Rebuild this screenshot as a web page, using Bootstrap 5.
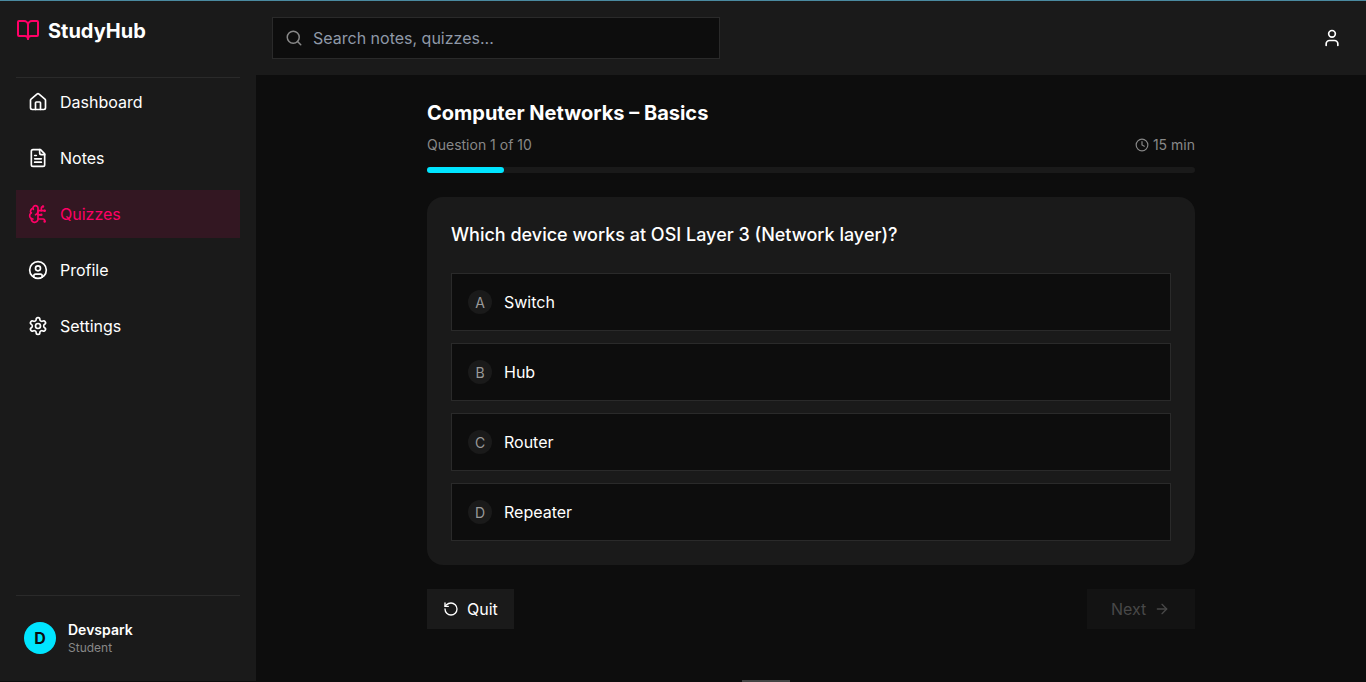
<!DOCTYPE html>
<html lang="en">
<head>
  <meta charset="UTF-8">
  <meta name="viewport" content="width=device-width, initial-scale=1.0">
  <title>StudyHub - Quiz</title>

  <link href="https://cdn.jsdelivr.net/npm/bootstrap@5.3.3/dist/css/bootstrap.min.css" rel="stylesheet">

  <style>
    html, body { height: 100%; overflow: hidden; }

    body {
      background-color: #0d0d0d;
      color: #fff;
      font-family: Inter, "Liberation Sans", sans-serif;
    }

    svg.ico {
      fill: none;
      stroke: currentColor;
      stroke-width: 2;
      stroke-linecap: round;
      stroke-linejoin: round;
      flex-shrink: 0;
    }

    .app-shell { height: 681px; border-top: 1px solid #4a8aa0; }

    /* sidebar */
    .side-panel { width: 256px; background-color: #1a1a1a; padding: 0 16px; }
    .brand-row { height: 77px; padding-top: 18px; border-bottom: 1px solid #2a2a2a; gap: 8px; }
    .brand-row svg { color: #ff0066; margin-top: -1px; }
    .brand-name { font-size: 20px; font-weight: 700; line-height: 24px; }
    .side-nav { gap: 8px; }
    .side-link {
      height: 48px;
      padding: 0 12px;
      gap: 12px;
      color: #fff;
      font-size: 16px;
      font-weight: 400;
      text-decoration: none;
    }
    .side-link:hover { color: #fff; }
    .side-link.is-active, .side-link.is-active:hover { color: #ff0066; background-color: rgba(255, 0, 102, 0.11); }
    .side-user { height: 86px; border-top: 1px solid #2a2a2a; padding: 0 8px 2px 8px; gap: 12px; }
    .user-avatar {
      width: 32px;
      height: 32px;
      background-color: #00e5ff;
      color: #0d0d0d;
      font-size: 16px;
      font-weight: 700;
    }
    .user-name { font-size: 14px; font-weight: 600; line-height: 20px; }
    .user-role { font-size: 12px; color: #888; line-height: 16px; }

    /* top bar */
    .top-bar { height: 74px; background-color: #1a1a1a; padding: 0 24px 0 16px; }
    .search-box {
      width: 448px;
      height: 42px;
      background-color: #0d0d0d;
      border: 1px solid #2a2a2a;
      padding-left: 12px;
      gap: 10px;
    }
    .search-box svg { color: #888; }
    .search-input {
      background: transparent;
      border: 0;
      outline: 0;
      padding: 0;
      color: #fff;
      font-size: 16px;
      width: 100%;
    }
    .search-input::placeholder { color: #8f99a8; opacity: 1; }
    .top-user { color: #fff; padding: 0; background: none; border: 0; }

    /* quiz */
    .quiz-area { width: 768px; margin: 0 auto; padding-top: 24px; }
    .quiz-title { font-size: 20px; font-weight: 700; line-height: 28px; margin: 0 0 8px; }
    .quiz-meta { font-size: 14px; line-height: 20px; color: #888; margin-bottom: 12px; }
    .quiz-track { height: 6px; background-color: #1a1a1a; border-radius: 3px; margin-bottom: 24px; }
    .quiz-fill { height: 100%; background-color: #00e5ff; border-radius: 3px; }
    .quiz-card { background-color: #1a1a1a; border-radius: 16px; padding: 24px; margin-bottom: 24px; }
    .quiz-question { font-size: 18px; font-weight: 500; line-height: 28px; margin: 0 0 24px; }
    .answer-list { gap: 12px; }
    .answer-row {
      height: 58px;
      background-color: #0d0d0d;
      border: 1px solid #2a2a2a;
      padding: 0 16px;
      gap: 12px;
      color: #fff;
      font-size: 16px;
      text-align: left;
    }
    .answer-letter {
      width: 24px;
      height: 24px;
      background-color: #1a1a1a;
      color: #999;
      font-size: 14px;
    }
    .quiz-btn {
      height: 40px;
      padding: 0 16px;
      gap: 8px;
      background-color: #1a1a1a;
      border: 0;
      border-radius: 0;
      color: #fff;
      font-size: 16px;
      font-weight: 400;
    }
    .quiz-btn:hover { background-color: #1a1a1a; color: #fff; }
    .quiz-btn-next { width: 108px; padding: 0 24px; background-color: #131313; color: #484848; }
    .quiz-btn-next:disabled { background-color: #131313; color: #484848; border: 0; opacity: 1; }
    .quiz-btn-quit { width: 87px; }

    .scroll-thumb {
      left: 742px;
      bottom: 0;
      width: 48px;
      height: 2px;
      background-color: #444;
    }
  </style>
</head>

<body>

<svg width="0" height="0" class="position-absolute">
  <symbol id="i-book" viewBox="0 0 24 24"><path d="M12 7v14"/><path d="M3 18a1 1 0 0 1-1-1V4a1 1 0 0 1 1-1h5a4 4 0 0 1 4 4 4 4 0 0 1 4-4h5a1 1 0 0 1 1 1v13a1 1 0 0 1-1 1h-6a3 3 0 0 0-3 3 3 3 0 0 0-3-3z"/></symbol>
  <symbol id="i-home" viewBox="0 0 24 24"><path d="M15 21v-8a1 1 0 0 0-1-1h-4a1 1 0 0 0-1 1v8"/><path d="M3 10a2 2 0 0 1 .709-1.528l7-5.999a2 2 0 0 1 2.582 0l7 5.999A2 2 0 0 1 21 10v9a2 2 0 0 1-2 2H5a2 2 0 0 1-2-2z"/></symbol>
  <symbol id="i-file" viewBox="0 0 24 24"><path d="M15 2H6a2 2 0 0 0-2 2v16a2 2 0 0 0 2 2h12a2 2 0 0 0 2-2V7Z"/><path d="M14 2v4a2 2 0 0 0 2 2h4"/><path d="M10 9H8"/><path d="M16 13H8"/><path d="M16 17H8"/></symbol>
  <symbol id="i-brain" viewBox="0 0 24 24"><path d="M12 5a3 3 0 1 0-5.997.125 4 4 0 0 0-2.526 5.77 4 4 0 0 0 .556 6.588A4 4 0 1 0 12 18Z"/><path d="M9 13a4.5 4.5 0 0 0 3-4"/><path d="M6.003 5.125A3 3 0 0 0 6.401 6.5"/><path d="M3.477 10.896a4 4 0 0 1 .585-.396"/><path d="M6 18a4 4 0 0 1-1.967-.516"/><path d="M12 13h4"/><path d="M12 18h6a2 2 0 0 1 2 2v1"/><path d="M12 8h8"/><path d="M16 8V5a2 2 0 0 1 2-2"/><circle cx="16" cy="13" r=".5"/><circle cx="18" cy="3" r=".5"/><circle cx="20" cy="21" r=".5"/><circle cx="20" cy="8" r=".5"/></symbol>
  <symbol id="i-profile" viewBox="0 0 24 24"><circle cx="12" cy="12" r="10"/><circle cx="12" cy="10" r="3"/><path d="M7 20.662V19a2 2 0 0 1 2-2h6a2 2 0 0 1 2 2v1.662"/></symbol>
  <symbol id="i-gear" viewBox="0 0 24 24"><path d="M12.22 2h-.44a2 2 0 0 0-2 2v.18a2 2 0 0 1-1 1.73l-.43.25a2 2 0 0 1-2 0l-.15-.08a2 2 0 0 0-2.73.73l-.22.38a2 2 0 0 0 .73 2.73l.15.1a2 2 0 0 1 1 1.72v.51a2 2 0 0 1-1 1.74l-.15.09a2 2 0 0 0-.73 2.73l.22.38a2 2 0 0 0 2.73.73l.15-.08a2 2 0 0 1 2 0l.43.25a2 2 0 0 1 1 1.73V20a2 2 0 0 0 2 2h.44a2 2 0 0 0 2-2v-.18a2 2 0 0 1 1-1.73l.43-.25a2 2 0 0 1 2 0l.15.08a2 2 0 0 0 2.73-.73l.22-.39a2 2 0 0 0-.73-2.73l-.15-.08a2 2 0 0 1-1-1.74v-.5a2 2 0 0 1 1-1.74l.15-.09a2 2 0 0 0 .73-2.73l-.22-.38a2 2 0 0 0-2.73-.73l-.15.08a2 2 0 0 1-2 0l-.43-.25a2 2 0 0 1-1-1.73V4a2 2 0 0 0-2-2z"/><circle cx="12" cy="12" r="3"/></symbol>
  <symbol id="i-user" viewBox="0 0 24 24"><path d="M19 21v-2a4 4 0 0 0-4-4H9a4 4 0 0 0-4 4v2"/><circle cx="12" cy="7" r="4"/></symbol>
  <symbol id="i-search" viewBox="0 0 24 24"><circle cx="11" cy="11" r="8"/><path d="m21 21-4.3-4.3"/></symbol>
  <symbol id="i-clock" viewBox="0 0 24 24"><circle cx="12" cy="12" r="10"/><polyline points="12 6 12 12 16 14"/></symbol>
  <symbol id="i-undo" viewBox="0 0 24 24"><path d="M3 12a9 9 0 1 0 9-9 9.75 9.75 0 0 0-6.74 2.74L3 8"/><path d="M3 3v5h5"/></symbol>
  <symbol id="i-arrow" viewBox="0 0 24 24"><path d="M5 12h14"/><path d="m12 5 7 7-7 7"/></symbol>
</svg>

<div class="app-shell d-flex">

  <!-- Sidebar -->
  <aside class="side-panel d-flex flex-column flex-shrink-0">
    <div class="brand-row d-flex align-items-start">
      <svg class="ico" width="24" height="24"><use href="#i-book"/></svg>
      <span class="brand-name">StudyHub</span>
    </div>

    <nav class="side-nav d-flex flex-column flex-grow-1">
      <a href="#" class="side-link d-flex align-items-center"><svg class="ico" width="20" height="20"><use href="#i-home"/></svg>Dashboard</a>
      <a href="#" class="side-link d-flex align-items-center"><svg class="ico" width="20" height="20"><use href="#i-file"/></svg>Notes</a>
      <a href="#" class="side-link is-active d-flex align-items-center"><svg class="ico" width="20" height="20"><use href="#i-brain"/></svg>Quizzes</a>
      <a href="#" class="side-link d-flex align-items-center"><svg class="ico" width="20" height="20"><use href="#i-profile"/></svg>Profile</a>
      <a href="#" class="side-link d-flex align-items-center"><svg class="ico" width="20" height="20"><use href="#i-gear"/></svg>Settings</a>
    </nav>

    <div class="side-user d-flex align-items-center">
      <div class="user-avatar rounded-circle d-flex align-items-center justify-content-center">D</div>
      <div>
        <div class="user-name">Devspark</div>
        <div class="user-role">Student</div>
      </div>
    </div>
  </aside>

  <div class="flex-grow-1 d-flex flex-column">

    <!-- Top bar -->
    <header class="top-bar d-flex align-items-center justify-content-between flex-shrink-0">
      <div class="search-box d-flex align-items-center">
        <svg class="ico" width="18" height="18"><use href="#i-search"/></svg>
        <input class="search-input" type="text" placeholder="Search notes, quizzes...">
      </div>
      <button class="top-user d-flex" type="button" aria-label="Account"><svg class="ico" width="20" height="20"><use href="#i-user"/></svg></button>
    </header>

    <!-- Quiz -->
    <main class="quiz-area">
      <h1 class="quiz-title">Computer Networks – Basics</h1>
      <div class="quiz-meta d-flex justify-content-between align-items-center">
        <span>Question 1 of 10</span>
        <span class="d-flex align-items-center gap-1"><svg class="ico" width="14" height="14"><use href="#i-clock"/></svg>15 min</span>
      </div>
      <div class="quiz-track"><div class="quiz-fill" style="width: 10%"></div></div>

      <section class="quiz-card">
        <h2 class="quiz-question">Which device works at OSI Layer 3 (Network layer)?</h2>
        <div class="answer-list d-flex flex-column">
          <button class="answer-row d-flex align-items-center" type="button"><span class="answer-letter rounded-circle d-flex align-items-center justify-content-center">A</span>Switch</button>
          <button class="answer-row d-flex align-items-center" type="button"><span class="answer-letter rounded-circle d-flex align-items-center justify-content-center">B</span>Hub</button>
          <button class="answer-row d-flex align-items-center" type="button"><span class="answer-letter rounded-circle d-flex align-items-center justify-content-center">C</span>Router</button>
          <button class="answer-row d-flex align-items-center" type="button"><span class="answer-letter rounded-circle d-flex align-items-center justify-content-center">D</span>Repeater</button>
        </div>
      </section>

      <div class="d-flex justify-content-between">
        <button class="btn quiz-btn quiz-btn-quit d-flex align-items-center" type="button"><svg class="ico" width="16" height="16"><use href="#i-undo"/></svg>Quit</button>
        <button class="btn quiz-btn quiz-btn-next d-flex align-items-center" type="button" disabled>Next<svg class="ico" width="16" height="16"><use href="#i-arrow"/></svg></button>
      </div>
    </main>
  </div>
</div>

<div class="scroll-thumb position-absolute"></div>

<script src="https://cdn.jsdelivr.net/npm/bootstrap@5.3.3/dist/js/bootstrap.bundle.min.js"></script>
</body>
</html>
